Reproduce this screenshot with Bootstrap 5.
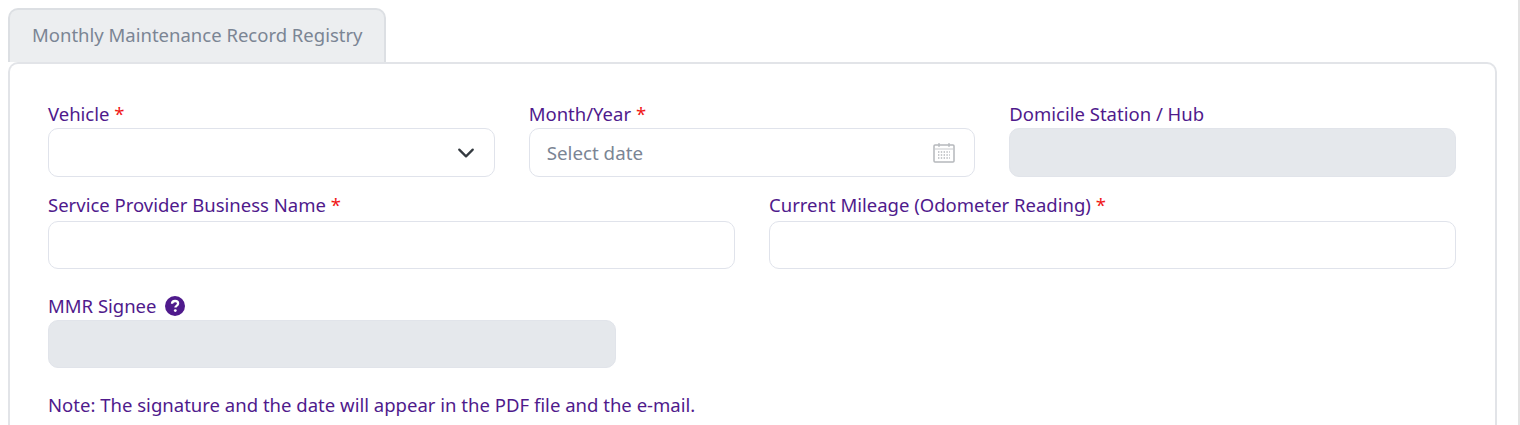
<!DOCTYPE html>
<html lang="en">
<head>
  <meta charset="UTF-8" />
  <title>Monthly Maintenance Record Registry</title>
  <link href="https://cdn.jsdelivr.net/npm/bootstrap@5.3.3/dist/css/bootstrap.min.css" rel="stylesheet">
  <style>
    html, body { height: 425px; overflow: hidden; }
    body { font-family: "Noto Sans", "Open Sans", sans-serif; background: #fff; }
    .mmr-page { height: 425px; display: flex; flex-direction: column; padding: 8px 23px 0 8px; }
    .mmr-tabs { border: 0; margin: 0; position: relative; z-index: 1; }
    .mmr-tabs .nav-link { height: 54px; width: 378px; margin: 0; padding: 0 0 2px 22px; display: flex; align-items: center; font-size: 18.5px; color: #7b8594; background: #eceef0; border: 2px solid #dcdfe3; border-bottom: 0; border-radius: 10px 10px 0 0; }
    .mmr-panel { flex: 1 1 auto; border: 2px solid #e2e4e8; border-bottom: 0; border-radius: 10px 10px 0 0; background: #fff; padding: 37px 39px 0 38px; }
    .mmr-panel label, .mmr-note { color: #4f1a8c; font-size: 18.5px; line-height: 26px; display: block; margin: 0; }
    .mmr-note { font-size: 18.55px; }
    .mmr-req { color: #f01818; }
    .mmr-row { display: flex; gap: 34px; }
    .mmr-field { flex: 1 1 0; min-width: 0; }
    .mmr-panel .form-control, .mmr-panel .form-select { height: 48px; margin-top: 3px; border: 1px solid #e0e3eb; border-radius: 10px; font-size: 18.75px; color: #7b8594; box-shadow: none; }
    .mmr-row-first .form-control, .mmr-row-first .form-select, .mmr-signee .form-control { margin-top: 1px !important; }
    .mmr-row-first .form-control, .mmr-row-first .form-select { height: 49px !important; }
    .mmr-panel .form-select { background-size: 18px 18px; background-position: right 19px center; }
    .mmr-panel .form-control { padding-left: 17px; }
    .mmr-panel .form-control::placeholder { color: #7b8594; }
    .mmr-panel .form-control:disabled { background: #e5e8ec; border-color: #e1e4ea; }
    .mmr-datewrap { position: relative; }
    .mmr-cal { position: absolute; right: 20px; top: 14px; }
    .mmr-help { display: inline-block; vertical-align: -3px; margin-left: 4px; }
    .mmr-row-second { margin-top: 15px; }
    .mmr-signee { width: 568px; margin-top: 24px; }
    .mmr-note { margin-top: 24px; }
    .mmr-edge { position: fixed; right: 0; top: 0; bottom: 0; width: 2px; background: #e3e3e3; }
  </style>
</head>
<body>
<div class="mmr-page">
  <ul class="nav nav-tabs mmr-tabs">
    <li class="nav-item"><a class="nav-link" href="#">Monthly Maintenance Record Registry</a></li>
  </ul>
  <div class="mmr-panel">
    <div class="mmr-row mmr-row-first">
      <div class="mmr-field">
        <label for="vehicle">Vehicle <span class="mmr-req">*</span></label>
        <select class="form-select" id="vehicle"></select>
      </div>
      <div class="mmr-field">
        <label for="month">Month/Year <span class="mmr-req">*</span></label>
        <div class="mmr-datewrap">
          <input class="form-control" id="month" type="text" placeholder="Select date">
          <svg class="mmr-cal" width="22" height="21" viewBox="0 0 22 21" fill="none">
            <rect x="1" y="3" width="20" height="17" rx="1" stroke="#b5b8bc" stroke-width="1.5"/>
            <path d="M1 7h20" stroke="#c8cacd"/>
            <path d="M6 1v4M16 1v4" stroke="#b5b8bc" stroke-width="1.2"/>
            <path d="M5 10h12M5 13h12M5 16h12" stroke="#b5b8bc" stroke-width="1.3" stroke-dasharray="1.4 1.4"/>
          </svg>
        </div>
      </div>
      <div class="mmr-field">
        <label for="hub">Domicile Station / Hub</label>
        <input class="form-control" id="hub" type="text" disabled>
      </div>
    </div>
    <div class="mmr-row mmr-row-second">
      <div class="mmr-field">
        <label for="provider">Service Provider Business Name <span class="mmr-req">*</span></label>
        <input class="form-control" id="provider" type="text">
      </div>
      <div class="mmr-field">
        <label for="mileage">Current Mileage (Odometer Reading) <span class="mmr-req">*</span></label>
        <input class="form-control" id="mileage" type="text">
      </div>
    </div>
    <div class="mmr-signee">
      <label for="signee">MMR Signee
        <svg class="mmr-help" width="20" height="20" viewBox="0 0 20 20">
          <circle cx="10" cy="10" r="10" fill="#4f1a8c"/>
          <path d="M7 7.8c0-1.8 1.3-2.8 3.1-2.8s3 1 3 2.5c0 1.2-.7 1.8-1.6 2.4-.8.5-1.1.9-1.1 1.7" fill="none" stroke="#fff" stroke-width="2.3"/>
          <circle cx="10.3" cy="14.6" r="1.4" fill="#fff"/>
        </svg>
      </label>
      <input class="form-control" id="signee" type="text" disabled>
    </div>
    <p class="mmr-note">Note: The signature and the date will appear in the PDF file and the e-mail.</p>
  </div>
</div>
<div class="mmr-edge"></div>
<script src="https://cdn.jsdelivr.net/npm/bootstrap@5.3.3/dist/js/bootstrap.bundle.min.js"></script>
</body>
</html>
